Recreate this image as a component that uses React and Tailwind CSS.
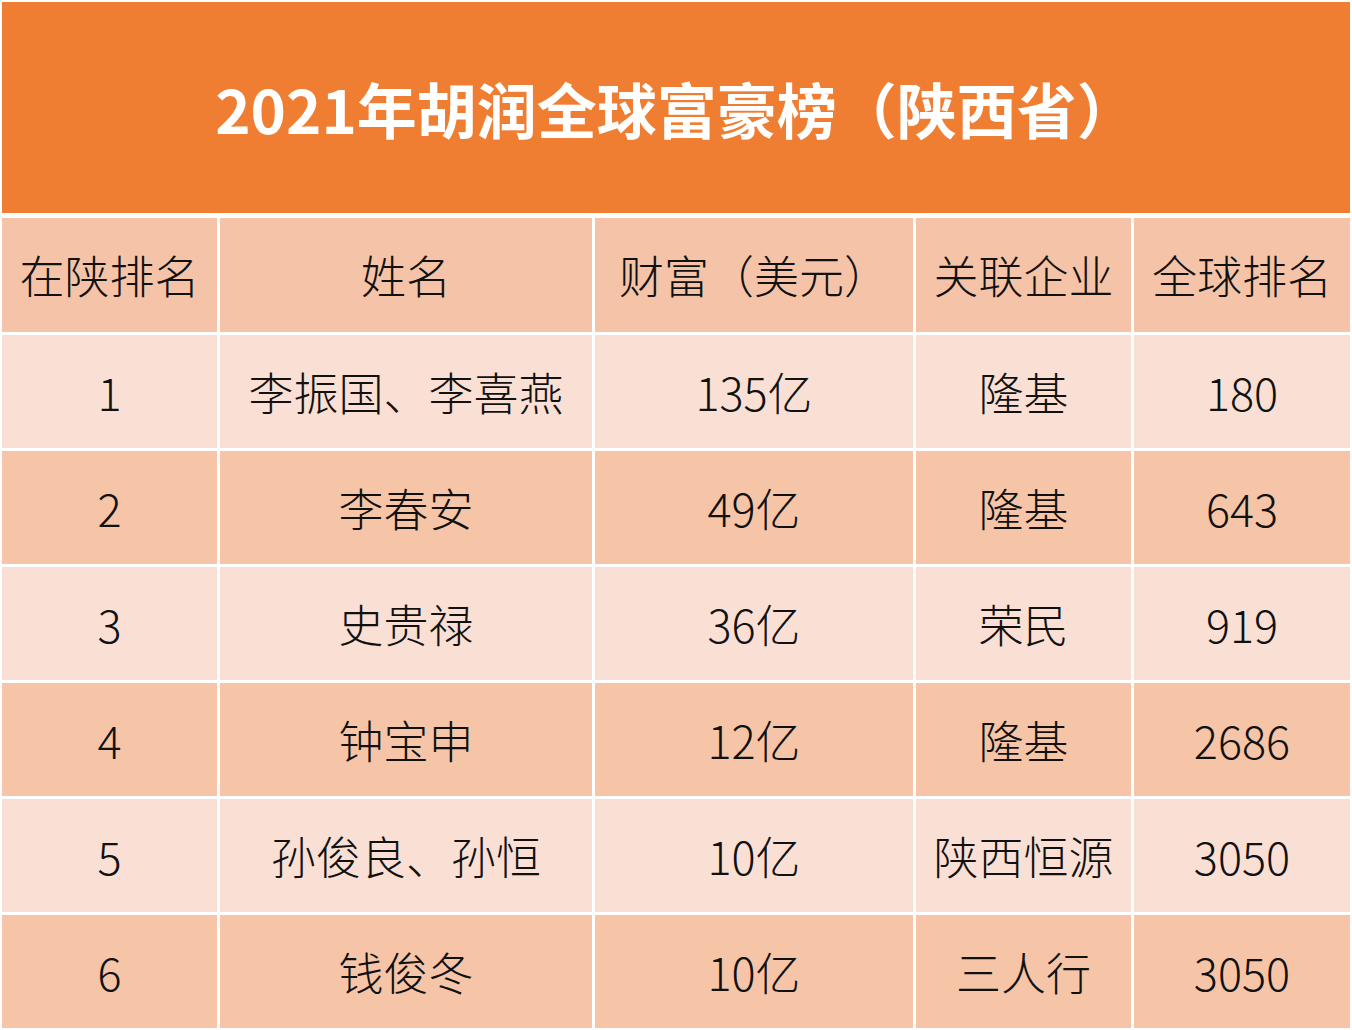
const headers = ["在陕排名", "姓名", "财富（美元）", "关联企业", "全球排名"];

const rows = [
  ["1", "李振国、李喜燕", "135亿", "隆基", "180"],
  ["2", "李春安", "49亿", "隆基", "643"],
  ["3", "史贵禄", "36亿", "荣民", "919"],
  ["4", "钟宝申", "12亿", "隆基", "2686"],
  ["5", "孙俊良、孙恒", "10亿", "陕西恒源", "3050"],
  ["6", "钱俊冬", "10亿", "三人行", "3050"],
];

const font = { fontFamily: '"Noto Sans CJK SC", "Noto Sans", sans-serif' };

const Cell = ({ children, dark }) => (
  <div
    className={`flex items-center justify-center h-[113px] text-[45px] font-light text-[#111] whitespace-nowrap ${
      dark ? "bg-[#f6c5a8]" : "bg-[#fae0d4]"
    }`}
  >
    {children}
  </div>
);

export default function App() {
  return (
    <div className="bg-white w-[1352px] h-[1030px] p-[2px] flex flex-col gap-[5px]" style={font}>
      <div className="h-[211px] bg-[#ef7d32] flex items-center justify-center">
        <h1 className="text-white font-bold text-[60px] leading-none">
          2021年胡润全球富豪榜（陕西省）
        </h1>
      </div>
      <div className="grid grid-cols-[215px_372px_318px_215px_1fr] gap-[3px]">
        {headers.map((h) => (
          <div
            key={h}
            className="flex items-center justify-center h-[114px] text-[45px] font-light text-[#111] bg-[#f5c4a8] whitespace-nowrap"
          >
            {h}
          </div>
        ))}
        {rows.map((r, i) =>
          r.map((c, j) => (
            <Cell key={i + "-" + j} dark={i % 2 === 1}>
              {c}
            </Cell>
          ))
        )}
      </div>
    </div>
  );
}
